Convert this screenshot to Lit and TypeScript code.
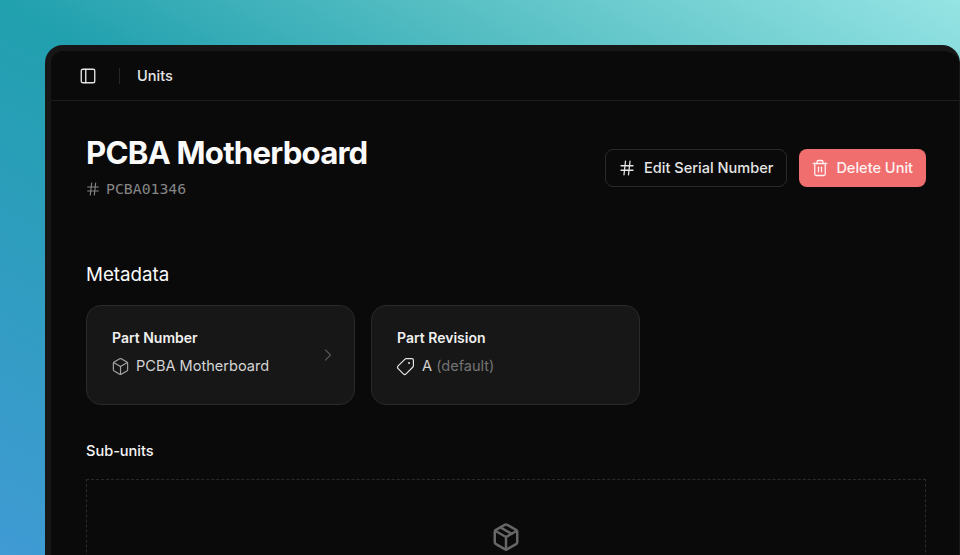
import { LitElement, html, css, svg } from "lit";
import { customElement } from "lit/decorators.js";

const icon = (cls: string, body: unknown) => html`<svg class="icon ${cls}" viewBox="0 0 24 24" fill="none" stroke="currentColor" stroke-width="2" stroke-linecap="round" stroke-linejoin="round">${body}</svg>`;

const hash = svg`<line x1="4" x2="20" y1="9" y2="9"/><line x1="4" x2="20" y1="15" y2="15"/><line x1="10" x2="8" y1="3" y2="21"/><line x1="16" x2="14" y1="3" y2="21"/>`;
const box = svg`<path d="M21 8a2 2 0 0 0-1-1.73l-7-4a2 2 0 0 0-2 0l-7 4A2 2 0 0 0 3 8v8a2 2 0 0 0 1 1.73l7 4a2 2 0 0 0 2 0l7-4A2 2 0 0 0 21 16Z"/><path d="m3.3 7 8.7 5 8.7-5"/><path d="M12 22V12"/>`;
const pkg = svg`<path d="m7.5 4.27 9 5.15"/><path d="M21 8a2 2 0 0 0-1-1.73l-7-4a2 2 0 0 0-2 0l-7 4A2 2 0 0 0 3 8v8a2 2 0 0 0 1 1.73l7 4a2 2 0 0 0 2 0l7-4A2 2 0 0 0 21 16Z"/><path d="m3.3 7 8.7 5 8.7-5"/><path d="M12 22V12"/>`;
const trash = svg`<path d="M3 6h18"/><path d="M19 6v14c0 1-1 2-2 2H7c-1 0-2-1-2-2V6"/><path d="M8 6V4c0-1 1-2 2-2h4c1 0 2 1 2 2v2"/><line x1="10" x2="10" y1="11" y2="17"/><line x1="14" x2="14" y1="11" y2="17"/>`;
const tag = svg`<path d="M12.586 2.586A2 2 0 0 0 11.172 2H4a2 2 0 0 0-2 2v7.172a2 2 0 0 0 .586 1.414l8.704 8.704a2.426 2.426 0 0 0 3.42 0l6.58-6.58a2.426 2.426 0 0 0 0-3.42z"/><circle cx="7.5" cy="7.5" r=".5" fill="currentColor"/>`;
const panel = svg`<rect width="18" height="18" x="3" y="3" rx="2"/><path d="M9 3v18"/>`;
const chevron = svg`<path d="m9 18 6-6-6-6"/>`;

@customElement("app-root")
export class AppRoot extends LitElement {
  static styles = css`
    :host {
      display: block;
      width: 960px;
      height: 555px;
      overflow: hidden;
      box-sizing: border-box;
      padding: 45px 0 0 45px;
      background: linear-gradient(to top right, #409ad4 0%, #21a0ae 50%, #5cc2c6 75%, #96e4e4 100%);
      font-family: Inter, "Noto Sans", sans-serif;
      color: #fafafa;
    }
    * { box-sizing: border-box; }
    .icon { display: block; flex: none; }
    .window {
      width: 915px;
      height: 560px;
      background: #0a0a0a;
      border: 6px solid #171717;
      border-right-width: 1px;
      border-bottom-width: 0;
      border-radius: 18px 18px 0 0;
    }
    .topbar {
      height: 50px;
      display: flex;
      align-items: center;
      padding-left: 28px;
      border-bottom: 1px solid #1d1d1d;
    }
    .i-panel { width: 18px; height: 18px; color: #e5e5e5; stroke-width: 1.8; }
    .sep { width: 1px; height: 16px; background: #262626; margin: 0 17px 0 22px; }
    .crumb { font-size: 14.56px; font-weight: 500; line-height: 20px; color: #e5e5e5; }
    .content { padding: 32px 33px 0 35px; }
    .head { display: flex; justify-content: space-between; align-items: flex-start; }
    h1 { margin: 0; font-size: 31.2px; line-height: 40px; font-weight: 700; letter-spacing: -0.8px; color: #fafafa; }
    .serial {
      display: flex;
      align-items: center;
      gap: 5px;
      margin-top: 6px;
      font-family: "DejaVu Sans Mono", "Liberation Mono", monospace;
      font-size: 14.8px;
      line-height: 20px;
      color: #858585;
    }
    .i-serial { width: 16px; height: 16px; margin-left: -1px; color: #858585; stroke-width: 1.7; }
    .actions { display: flex; gap: 12px; margin-top: 16px; }
    .btn {
      height: 38px;
      display: flex;
      align-items: center;
      gap: 8px;
      padding: 0 13px 0 12px;
      border-radius: 8px;
      font-size: 14.56px;
      font-weight: 500;
    }
    .btn .icon { width: 18px; height: 18px; stroke-width: 1.7; }
    .outline { border: 1px solid #2a2a2a; color: #e5e5e5; }
    .danger { background: #f16e6e; color: #fef2f2; gap: 7px; }
    h2 { margin: 62px 0 0; font-size: 18.72px; line-height: 28px; font-weight: 400; color: #fafafa; }
    .cards { display: flex; gap: 16px; margin-top: 16px; }
    .card {
      width: 269px;
      height: 100px;
      display: flex;
      align-items: center;
      justify-content: space-between;
      padding: 0 16px 6px 25px;
      background: #171717;
      border: 1px solid #2a2a2a;
      border-radius: 15px;
    }
    .label { font-size: 14px; line-height: 20px; font-weight: 600; color: #f0f0f0; }
    .value {
      display: flex;
      align-items: center;
      gap: 6px;
      margin-top: 8px;
      font-size: 14.56px;
      line-height: 20px;
      color: #d4d4d4;
    }
    .value .icon { width: 19px; height: 19px; margin-left: -1px; stroke-width: 1.5; }
    .i-box { color: #a3a3a3; }
    .value .i-tag { transform: scaleX(-1); color: #e5e5e5; margin-right: 1px; }
    .muted { color: #737373; }
    .i-chev { width: 20px; height: 20px; margin-bottom: -6px; color: #525252; stroke-width: 1.5; }
    h3 { margin: 36px 0 0; font-size: 14.56px; line-height: 20px; font-weight: 500; color: #f5f5f5; }
    .empty {
      margin-top: 18px;
      height: 200px;
      border: 1px dashed #2a2a2a;
      display: flex;
      justify-content: center;
      padding-top: 42px;
    }
    .i-pkg { width: 30px; height: 30px; color: #666; stroke-width: 2; }
  `;

  render() {
    return html`
      <div class="window">
        <div class="topbar">
          ${icon("i-panel", panel)}
          <div class="sep"></div>
          <div class="crumb">Units</div>
        </div>
        <div class="content">
          <div class="head">
            <div>
              <h1>PCBA Motherboard</h1>
              <div class="serial">${icon("i-serial", hash)}<span>PCBA01346</span></div>
            </div>
            <div class="actions">
              <div class="btn outline">${icon("", hash)}Edit Serial Number</div>
              <div class="btn danger">${icon("", trash)}Delete Unit</div>
            </div>
          </div>
          <h2>Metadata</h2>
          <div class="cards">
            <div class="card">
              <div>
                <div class="label">Part Number</div>
                <div class="value">${icon("i-box", box)}PCBA Motherboard</div>
              </div>
              ${icon("i-chev", chevron)}
            </div>
            <div class="card">
              <div>
                <div class="label">Part Revision</div>
                <div class="value">${icon("i-tag", tag)}<span>A <span class="muted">(default)</span></span></div>
              </div>
            </div>
          </div>
          <h3>Sub-units</h3>
          <div class="empty">${icon("i-pkg", pkg)}</div>
        </div>
      </div>
    `;
  }
}
